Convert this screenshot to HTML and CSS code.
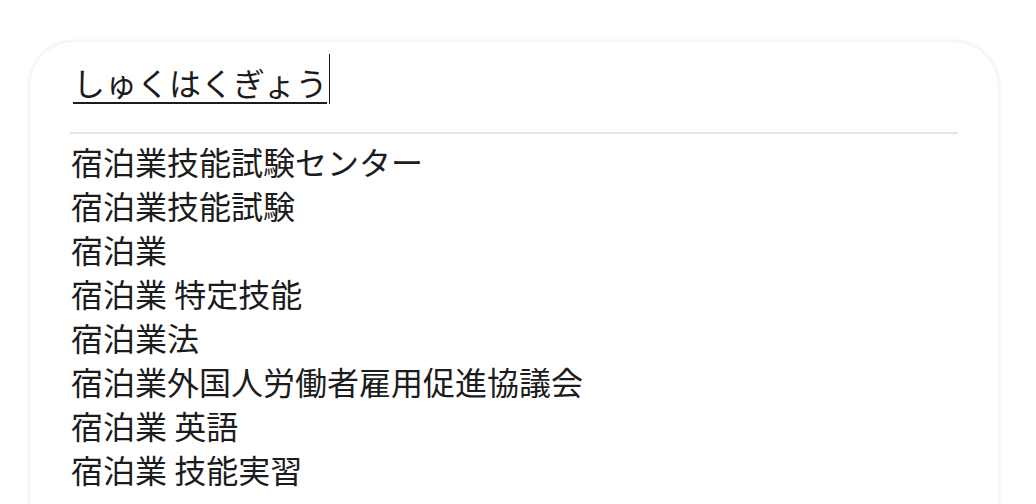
FILE: index.html
```html
<!DOCTYPE html>
<html lang="ja">
<head>
    <meta charset="UTF-8">
    <meta name="viewport" content="width=device-width, initial-scale=1.0">
    <title>しゅくはくぎょう</title>
    <link rel="stylesheet" href="styles.css">
</head>
<body>

    <div class="search-card">
        <div class="search-box">
            <span class="query">しゅくはくぎょう</span><span class="caret"></span>
        </div>

        <ul class="suggestions">
            <li>宿泊業技能試験センター</li>
            <li>宿泊業技能試験</li>
            <li>宿泊業</li>
            <li>宿泊業 特定技能</li>
            <li>宿泊業法</li>
            <li>宿泊業外国人労働者雇用促進協議会</li>
            <li>宿泊業 英語</li>
            <li>宿泊業 技能実習</li>
        </ul>
    </div>

</body>
</html>
```

FILE: styles.css
```css
body {
    margin: 0;
    background-color: #fff;
    font-family: "Noto Sans CJK JP", "Noto Sans", sans-serif;
    color: #1c1c1c;
    height: 504px;
    overflow: hidden;
}

.search-card {
    margin: 42px 38px 0 30px;
    background-color: #fff;
    border-radius: 44px 44px 0 0;
    box-shadow: 0 0 5px rgba(0, 0, 0, 0.12);
    padding: 0 40px 40px;
}

.search-box {
    display: flex;
    align-items: flex-start;
    height: 78px;
    padding: 12px 0 0 3px;
    border-bottom: 2px solid #e3e3e8;
}

.query {
    font-size: 32px;
    line-height: 40px;
    border-bottom: 2px solid #1c1c1c;
    padding-top: 8px;
}

.caret {
    width: 1px;
    height: 50px;
    margin-left: 2px;
    background-color: #1c1c1c;
}

.suggestions {
    list-style-type: none;
    margin: 0;
    padding: 5px 0 0 1px;
}

.suggestions li {
    font-size: 32px;
    line-height: 44px;
    white-space: nowrap;
}
```
